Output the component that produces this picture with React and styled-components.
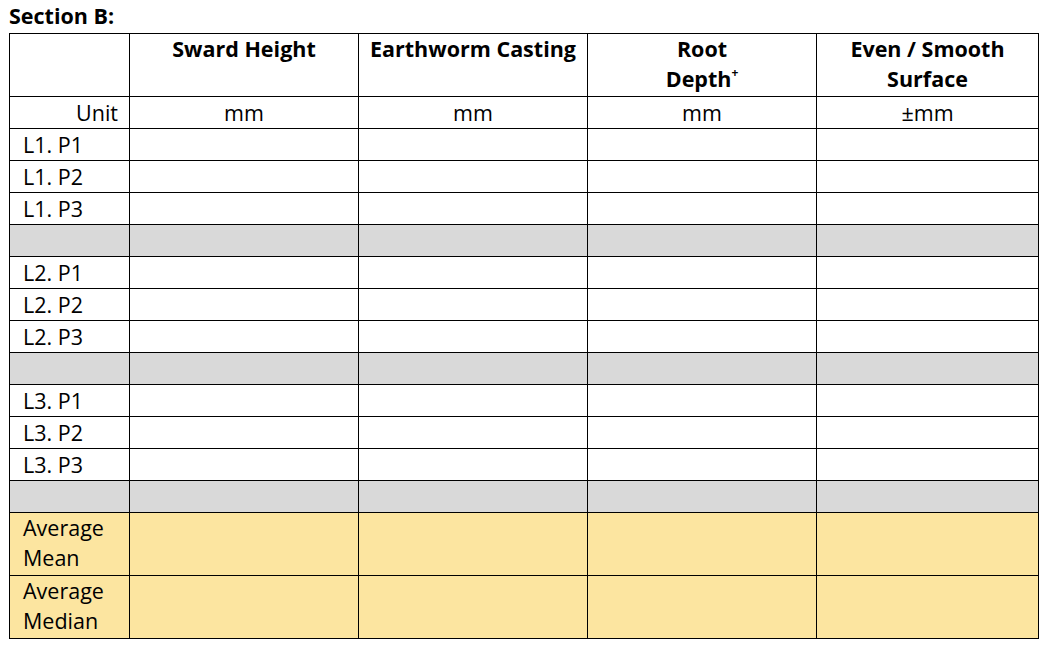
import React from "react";
import styled, { createGlobalStyle } from "styled-components";

const GlobalStyle = createGlobalStyle`
  body {
    margin: 0;
    background: #fff;
    font-family: "Open Sans", Lato, sans-serif;
    color: #000;
  }
`;

const columns = [
  { title: ["Sward Height"], unit: "mm" },
  { title: ["Earthworm Casting"], unit: "mm" },
  { title: ["Root", "Depth"], sup: "+", unit: "mm" },
  { title: ["Even / Smooth", "Surface"], unit: "±mm" },
];

const rows = [
  { label: "L1. P1" },
  { label: "L1. P2" },
  { label: "L1. P3" },
  { gap: true },
  { label: "L2. P1" },
  { label: "L2. P2" },
  { label: "L2. P3" },
  { gap: true },
  { label: "L3. P1" },
  { label: "L3. P2" },
  { label: "L3. P3" },
  { gap: true },
];

const averages = [
  ["Average", "Mean"],
  ["Average", "Median"],
];

function App() {
  return (
    <>
      <GlobalStyle />
      <Page>
        <Title>Section B:</Title>
        <Sheet>
          <colgroup>
            <col style={{ width: 120 }} />
            <col style={{ width: 229 }} />
            <col style={{ width: 229 }} />
            <col style={{ width: 229 }} />
            <col style={{ width: 222 }} />
          </colgroup>
          <thead>
            <HeadRow>
              <HeadCell />
              {columns.map((c, i) => (
                <HeadCell key={i}>
                  {c.title.map((line, j) => (
                    <Line key={j}>
                      {line}
                      {c.sup && j === c.title.length - 1 && <Sup>{c.sup}</Sup>}
                    </Line>
                  ))}
                </HeadCell>
              ))}
            </HeadRow>
            <Row>
              <UnitLabel>Unit</UnitLabel>
              {columns.map((c, i) => (
                <UnitCell key={i}>{c.unit}</UnitCell>
              ))}
            </Row>
          </thead>
          <tbody>
            {rows.map((r, i) => (
              <Row key={i}>
                <Label $shade={r.gap ? "gray" : undefined}>{r.label}</Label>
                {columns.map((_, j) => (
                  <Cell key={j} $shade={r.gap ? "gray" : undefined} />
                ))}
              </Row>
            ))}
            {averages.map((a, i) => (
              <TallRow key={i}>
                <Label $shade="gold">
                  {a.map((line, j) => (
                    <Line key={j}>{line}</Line>
                  ))}
                </Label>
                {columns.map((_, j) => (
                  <Cell key={j} $shade="gold" />
                ))}
              </TallRow>
            ))}
          </tbody>
        </Sheet>
      </Page>
    </>
  );
}

const shades = {
  gray: "#d9d9d9",
  gold: "#fce5a0",
};

const Page = styled.div`
  padding: 2px 5px 0 9px;
`;

const Title = styled.div`
  font-weight: 700;
  font-size: 21.5px;
  line-height: 27px;
  height: 31px;
`;

const Sheet = styled.table`
  border-collapse: collapse;
  table-layout: fixed;
  width: 1030px;
  font-size: 21.5px;
`;

const HeadRow = styled.tr`
  height: 63px;
`;

const Row = styled.tr`
  height: 32px;
`;

const TallRow = styled.tr`
  height: 63px;
`;

const Cell = styled.td`
  border: 1.5px solid #000;
  padding: 0;
  background: ${({ $shade }) => shades[$shade] || "#fff"};
`;

const HeadCell = styled.th`
  border: 1.5px solid #000;
  padding: 0 4px;
  vertical-align: top;
  text-align: center;
  font-weight: 700;
  line-height: 30px;
`;

const Line = styled.div`
  line-height: 30px;
`;

const Sup = styled.sup`
  font-size: 12px;
  vertical-align: top;
  line-height: 14px;
  position: relative;
  top: 2px;
`;

const UnitLabel = styled.td`
  border: 1.5px solid #000;
  padding: 0 11px 0 0;
  text-align: right;
  line-height: 30px;
`;

const UnitCell = styled.td`
  border: 1.5px solid #000;
  padding: 0;
  text-align: center;
  line-height: 30px;
`;

const Label = styled(Cell)`
  padding: 0 0 0 13px;
  vertical-align: top;
  line-height: 31px;
`;

export default App;
